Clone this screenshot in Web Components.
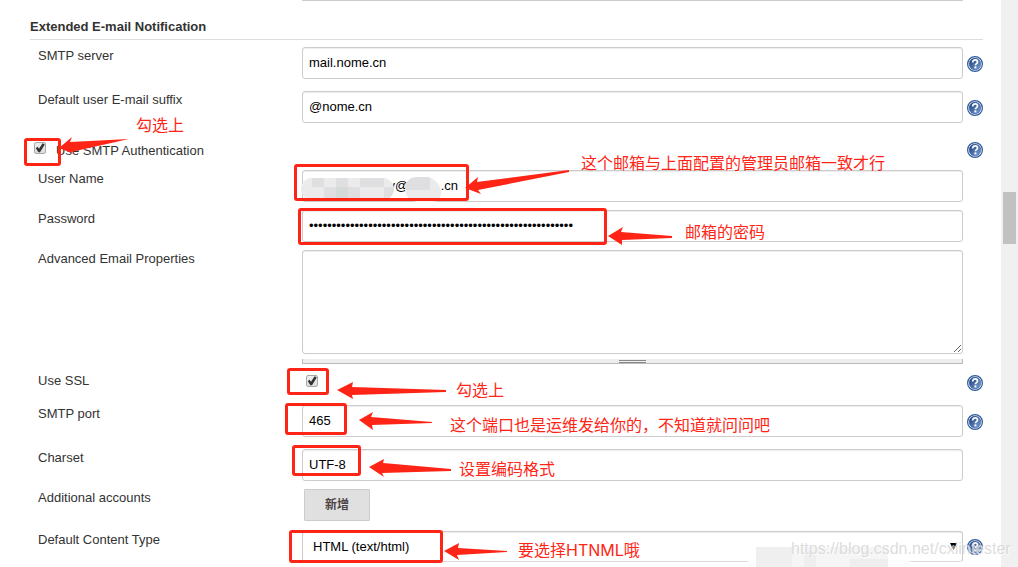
<!DOCTYPE html>
<html lang="zh-CN">
<head>
<meta charset="utf-8">
<title>Configure System</title>
<style>
  html, body { margin: 0; height: 100%; background: #fff; }
  body { overflow: hidden; font: 13px/16px "Liberation Sans", "Noto Sans CJK SC", sans-serif; color: #333; }
</style>
</head>
<body>
<config-page></config-page>

<script>
const define = (name, html, setup) => {
  const tpl = document.createElement('template');
  tpl.innerHTML = html;
  customElements.define(name, class extends HTMLElement {
    constructor() {
      super();
      this.attachShadow({ mode: 'open' }).append(tpl.content.cloneNode(true));
    }
    connectedCallback() { if (setup) setup(this, this.shadowRoot); }
  });
};

define('help-button', `
  <style>
    :host { display: block; width: 16px; height: 16px; }
    button { display: block; width: 16px; height: 16px; padding: 0; border: 0; background: none; cursor: pointer; }
    svg { display: block; }
  </style>
  <button type="button" aria-label="Help">
    <svg width="16" height="16" viewBox="0 0 16 16">
      <defs><linearGradient id="g" x1="0" y1="0" x2="1" y2="1">
        <stop offset="0.1" stop-color="#1f4382"/><stop offset="0.9" stop-color="#7499cc"/>
      </linearGradient></defs>
      <circle cx="8" cy="8" r="7.4" fill="#fff" stroke="#2f5a9c" stroke-width="1.2"/>
      <circle cx="8" cy="8" r="5.9" fill="url(#g)" stroke="#2f5a9c" stroke-width="0.5"/>
      <path d="M5.6 6.400C5.6 4.700 6.600 3.900 8.100 3.900s2.400.8 2.400 2.100c0 1.600-2.100 1.600-2.100 3.300" fill="none" stroke="#fff" stroke-width="1.7"/>
      <rect x="7.400" y="10.400" width="2" height="2" fill="#fff"/>
    </svg>
  </button>`);

define('form-row', `
  <style>
    :host { display: grid; grid-template-columns: 272px minmax(0, 1fr) 16px; padding-bottom: 8px; }
    .label { padding: 1px 0 0 8px; }
    .control { padding-right: 4px; }
    :host([help]) { padding-bottom: 12px; }
    :host([help]) help-button { margin-top: 9px; }
    :host(:not([help])) help-button { display: none; }
    :host([kind="inline"]) { grid-template-columns: minmax(0, 1fr) 16px; padding: 7px 0 11px; }
    :host([kind="inline"]) .label { display: none; }
    :host([kind="inline"]) help-button { margin-top: 0; }
    :host([kind="check"]) { min-height: 21px; }
    :host([kind="check"]) help-button { margin-top: 3px; }
    :host([kind="check"]) .control { padding: 3px 4px 0; }
    :host([kind="button"]) { padding-bottom: 10px; }
    :host([kind="button"]) .control { padding-left: 2px; }
    :host([kind="select"]) help-button { margin-top: 8px; }
  </style>
  <div class="label"><slot name="label"></slot></div>
  <div class="control"><slot></slot></div>
  <help-button></help-button>`);

define('scroll-rail', `
  <style>
    :host { display: flex; flex-direction: column; width: 17px; background: #f0f0f0; }
    .before { flex: 192; } .thumb { flex: 52; margin: 0 2px; background: #c1c1c1; } .after { flex: 323; }
  </style>
  <div class="before"></div><div class="thumb"></div><div class="after"></div>`);

define('settings-form', `
  <style>
    :host { display: block; padding: 0 18px 0 30px; }
    .previous { height: 1px; margin: 0 20px 0 272px; background: #ccc; }
    h2 { margin: 0 0 7px; padding: 18px 0 4px; border-bottom: 1px solid #ddd; font-size: 13px; line-height: 16px; font-weight: bold; }
    label { display: block; }
    input, textarea, select, button { font: inherit; color: #000; margin: 0; box-sizing: border-box; }
    .text, textarea, select { display: block; width: 100%; height: 32px; padding: 0 6px 2px; border: 1px solid #ccc; border-radius: 3px; background: #fff; box-shadow: inset 0 1px 1px rgba(0,0,0,.075); outline: 0; }
    textarea { height: 104px; padding: 6px; resize: vertical; }
    .grip { display: flex; justify-content: center; height: 4px; margin-top: 5px; border: solid #bbb; border-width: 0 1px 1px; background: #eee; }
    .grip i { width: 27px; height: 1px; margin-top: 1px; border: solid #888; border-width: 1px 0; }
    .tick { appearance: none; display: block; width: 12px; height: 12px; border: 1px solid #aaa; border-radius: 2px; background: linear-gradient(#eee, #ddd); }
    .tick::before { content: ""; display: block; width: 10px; height: 10px; background: #333; clip-path: polygon(8% 52%, 26% 38%, 40% 58%, 76% 2%, 98% 14%, 50% 92%, 34% 92%); }
    .inline { display: flex; align-items: flex-start; gap: 10px; padding-left: 4px; }
    .inline label { padding-top: 1px; }
    .add { display: block; height: 32px; width: 66px; padding: 0; border: 1px solid #ccc; border-radius: 1px; background: #e0e0e0; color: #4d4545; font-size: 12px; font-weight: bold; }
    .pick { display: grid; align-items: center; }
    .pick > * { grid-area: 1 / 1; }
    select { appearance: none; padding: 0 10px; height: 31px; border-bottom-color: #ddd; }
    .pick svg { justify-self: end; margin-right: 6px; }
  </style>
  <form>
    <div class="previous"></div>
    <h2>Extended E-mail Notification</h2>
    <form-row help><label slot="label" for="server">SMTP server</label><input class="text" id="server" value="mail.nome.cn"></form-row>
    <form-row help><label slot="label" for="suffix">Default user E-mail suffix</label><input class="text" id="suffix" value="@nome.cn"></form-row>
    <form-row help kind="inline"><div class="inline"><input class="tick" type="checkbox" id="auth" checked><label for="auth">Use SMTP Authentication</label></div></form-row>
    <form-row><label slot="label" for="user">User Name</label><input class="text" id="user"></form-row>
    <form-row><label slot="label" for="pass">Password</label><input class="text" id="pass" type="password" autocomplete="off"></form-row>
    <form-row><label slot="label" for="props">Advanced Email Properties</label><textarea id="props"></textarea><div class="grip"><i></i></div></form-row>
    <form-row help kind="check"><label slot="label" for="ssl">Use SSL</label><input class="tick" type="checkbox" id="ssl" checked></form-row>
    <form-row help><label slot="label" for="port">SMTP port</label><input class="text" id="port" value="465"></form-row>
    <form-row><label slot="label" for="charset">Charset</label><input class="text" id="charset" value="UTF-8"></form-row>
    <form-row kind="button"><label slot="label" for="add">Additional accounts</label><button class="add" id="add" type="button">新增</button></form-row>
    <form-row help kind="select"><label slot="label" for="type">Default Content Type</label>
      <div class="pick"><select id="type"><option>HTML (text/html)</option><option>Plain Text (text/plain)</option></select>
      <svg width="7" height="7" viewBox="0 0 7 7"><path d="M0 0H7L3.500 7Z" fill="#000"/></svg></div></form-row>
  </form>`, (el, root) => {
  root.getElementById('user').value = '\u00a0'.repeat(22) + 'y@' + '\u00a0'.repeat(9) + '.cn';
  root.getElementById('pass').value = 'x'.repeat(58);
});

define('pen-note', `
  <style>
    :host { position: absolute; font: 16px/24px Inter, "Noto Sans CJK SC", sans-serif; color: #ff2516; white-space: nowrap; }
  </style>
  <slot></slot>`, el => {
  el.style.left = el.getAttribute('x') + 'px';
  el.style.top = el.getAttribute('y') + 'px';
});

define('pen-layer', `
  <style>
    :host { position: absolute; inset: 0; pointer-events: none; overflow: hidden; }
    svg { position: absolute; left: 0; top: 0; overflow: visible; }
    .mark { position: absolute; left: 791px; top: 539px; font-size: 16px; line-height: 20px; color: rgba(212,212,212,.8); text-shadow: 1px 1px 0 rgba(255,255,255,.6); white-space: nowrap; }
  </style>
  <svg width="1" height="1">
    <g shape-rendering="crispEdges">
      <path d="M748 560H910V567H748Z" fill="#fdfdfd"/>
      <path d="M756 547H792V567H756Z" fill="#efefef"/><path d="M792 547H888V567H792Z" fill="#f5f5f5"/>
      <path d="M804 555H816V567H804ZM850 559H888V567H850Z" fill="#eee"/>
    </g>
    <clipPath id="c"><rect x="301" y="178" width="93" height="22" rx="11"/><path d="M405 188a12 11 0 0 1 12-11h9c8 0 15 8 15 15s-3 10-10 10h-11c-9 0-15-5-15-14Z"/></clipPath>
    <g clip-path="url(#c)">
      <path d="M300 176H442V204H300Z" fill="#ebebec"/>
      <path d="M312 178H324V187H312ZM336 178H348V187H336ZM360 178H384V187H360ZM404 176H430V190H404Z" fill="#dfdfe2"/>
      <path d="M324 187H336V199H324ZM348 187H360V199H348ZM384 187H396V199H384Z" fill="#dfdfe1"/>
      <path d="M336 187H348V199H336Z" fill="#d3dad8"/>
      <path d="M300 198H442V204H300Z" fill="#f3f3f3"/>
    </g>
    <g fill="none" stroke="#ff2516" stroke-width="3">
      <rect x="25.500" y="139.500" width="34" height="25" rx="1.500"/>
      <rect x="295.500" y="165.500" width="172" height="34" rx="1.500"/>
      <rect x="299.500" y="209.500" width="306" height="34" rx="1.500"/>
      <rect x="288.500" y="369.500" width="39" height="24" rx="1.500"/>
      <rect x="286.500" y="404.500" width="59" height="29" rx="1.500"/>
      <rect x="293.500" y="446.500" width="66" height="28" rx="1.500"/>
      <rect x="290.500" y="531.500" width="151" height="30" rx="1.500"/>
    </g>
    <g fill="#ff2516">
      <path d="M59 148L72 137L70 142L129 139L71 152L74 154Z"/>
      <path d="M465 188L478 177L477 182L569 170V172L478 190L481 194Z"/>
      <path d="M608 236L623 227L621 232L672 236V238L622 240V245Z"/>
      <path d="M337 390L353 382L352 387L446 390V392L352 395L353 399Z"/>
      <path d="M359 420L373 412L371 417L432 422V423L372 425L373 430Z"/>
      <path d="M369 467L384 459L383 463L451 469V471L382 473L384 477Z"/>
      <path d="M444 551L459 543L458 548L507 551V552L457 555L459 560Z"/>
    </g>
  </svg>
  <slot></slot>
  <div class="mark">https://blog.csdn.net/cxlintester</div>`);

define('config-page', `
  <style>
    :host { position: relative; display: flex; height: 100vh; overflow: hidden; }
    settings-form { flex: 1; min-width: 0; }
  </style>
  <settings-form></settings-form>
  <scroll-rail></scroll-rail>
  <pen-layer>
    <pen-note x="136" y="113">勾选上</pen-note>
    <pen-note x="581" y="151">这个邮箱与上面配置的管理员邮箱一致才行</pen-note>
    <pen-note x="685" y="220">邮箱的密码</pen-note>
    <pen-note x="456" y="378">勾选上</pen-note>
    <pen-note x="450" y="413">这个端口也是运维发给你的，不知道就问问吧</pen-note>
    <pen-note x="459" y="457">设置编码格式</pen-note>
    <pen-note x="518" y="538">要选择HTNML哦</pen-note>
  </pen-layer>`);
</script>
</body>
</html>
